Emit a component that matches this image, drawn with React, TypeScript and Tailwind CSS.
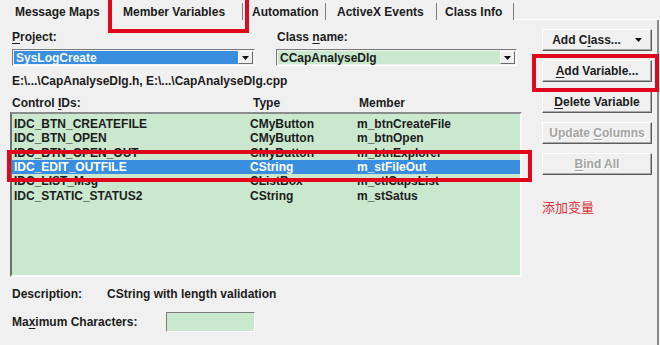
import type { ReactNode } from "react";

const rows = [
  { id: "IDC_BTN_CREATEFILE", type: "CMyButton", member: "m_btnCreateFile" },
  { id: "IDC_BTN_OPEN", type: "CMyButton", member: "m_btnOpen" },
  { id: "IDC_BTN_OPEN_OUT", type: "CMyButton", member: "m_btnExplorer" },
  { id: "IDC_EDIT_OUTFILE", type: "CString", member: "m_stFileOut", selected: true },
  { id: "IDC_LIST_Msg", type: "CListBox", member: "m_ctlCapsList" },
  { id: "IDC_STATIC_STATUS2", type: "CString", member: "m_stSatus" },
];

const tabs = [
  { label: "Message Maps", cls: "w-[108px] pl-[15px]" },
  { label: "Member Variables", cls: "w-[135px] pl-[15px] border-r border-r-[#7d7d7d]" },
  { label: "Automation", cls: "w-[83px] pl-[9px] border-r border-r-[#7d7d7d]" },
  { label: "ActiveX Events", cls: "w-[111px] pl-[11px] border-r border-r-[#7d7d7d]" },
  { label: "Class Info", cls: "w-[77px] pl-[8px] border-r border-r-[#7d7d7d]" },
];

const U = ({ children }: { children: ReactNode }) => (
  <span className="underline underline-offset-[2px]">{children}</span>
);

const DropBtn = () => (
  <div className="flex h-full w-[15px] items-center justify-center border border-t-white border-l-white border-b-[#6b6b6b] border-r-[#6b6b6b] bg-[#f0f0f0]">
    <svg width="7" height="4" viewBox="0 0 7 4">
      <path d="M0 0h7L3.5 4z" fill="#111" />
    </svg>
  </div>
);

const Btn = ({ children, disabled }: { children: ReactNode; disabled?: boolean }) => (
  <div
    className={`flex h-[22px] w-[110px] items-center justify-center border border-t-white border-l-white border-b-[#5c5c5c] border-r-[#5c5c5c] shadow-[inset_-1px_-1px_0_#a9a9a9] bg-[#f0f0f0] ${
      disabled ? "text-[#a3a3a3] [text-shadow:1px_1px_0_#ffffff]" : ""
    }`}
  >
    {children}
  </div>
);

export default function App() {
  return (
    <div className="relative h-[345px] w-[660px] overflow-hidden bg-[#f0f0f0] font-['Liberation_Sans',Arial,sans-serif] text-[12px] font-bold leading-[14px] text-[#1c1c1c]">
      {/* tab strip */}
      <div className="flex h-[20px] items-stretch">
        {tabs.map((t) => (
          <div key={t.label} className={`flex items-center mt-[3px] ${t.cls}`}>
            {t.label}
          </div>
        ))}
        <div className="flex-1 border-b border-b-white" />
      </div>

      <div className="flex h-[325px] w-[659px] border-r-2 border-r-[#8a8a8a]">
        {/* left part */}
        <div className="flex w-[532px] flex-col pl-[10px] pt-[10px]">
          <div className="flex h-[14px] pl-[2px]">
            <div className="w-[265px]">
              <U>P</U>roject:
            </div>
            <div>
              Class <U>n</U>ame:
            </div>
          </div>

          <div className="mt-[5px] flex h-[17px] pl-[2px]">
            <div className="flex w-[243px] border border-t-[#7a7a7a] border-l-[#7a7a7a] border-b-white border-r-white p-[1px]">
              <div className="flex flex-1 items-center bg-[#3a8ee0] pl-[2px] text-[#f4f8ff]">SysLogCreate</div>
              <DropBtn />
            </div>
            <div className="ml-[21px] flex w-[241px] border border-t-[#7a7a7a] border-l-[#7a7a7a] border-b-white border-r-white p-[1px]">
              <div className="flex flex-1 items-center bg-[#c9e8ce] pl-[2px]">CCapAnalyseDlg</div>
              <DropBtn />
            </div>
          </div>

          <div className="mt-[8px] h-[14px] pl-[2px]">E:\...\CapAnalyseDlg.h, E:\...\CapAnalyseDlg.cpp</div>

          <div className="mt-[8px] flex h-[14px] pl-[2px]">
            <div className="w-[241px]">
              Control <U>I</U>Ds:
            </div>
            <div className="w-[106px]">Type</div>
            <div>Member</div>
          </div>

          <div className="mt-[2px] h-[165px] w-[512px] border-2 border-t-[#8c8c8c] border-l-[#6e6e6e] border-b-[#fafafa] border-r-[#fafafa] bg-[#c9e8ce] pt-[3px]">
            {rows.map((r) => (
              <div
                key={r.id}
                className={`flex h-[14.3px] items-center leading-[14px] ${
                  r.selected ? "bg-[#3a8ee0] text-white" : ""
                }`}
              >
                <div className="w-[238px] pl-[2px]">{r.id}</div>
                <div className="w-[107px]">{r.type}</div>
                <div>{r.member}</div>
              </div>
            ))}
          </div>

          <div className="mt-[10px] flex h-[14px] pl-[2px]">
            <div className="w-[95px]">Description:</div>
            <div>CString with length validation</div>
          </div>

          <div className="mt-[11px] flex h-[20px] items-center pl-[2px]">
            <div className="w-[154px]">
              Ma<U>x</U>imum Characters:
            </div>
            <div className="h-[20px] w-[89px] border border-t-[#7a7a7a] border-l-[#7a7a7a] border-b-white border-r-white bg-[#c9e8ce]" />
          </div>
        </div>

        {/* right buttons */}
        <div className="flex flex-col gap-[9px] pl-[10px] pt-[9px]">
          <Btn>
            <span className="mr-[14px]">
              Add C<U>l</U>ass...
            </span>
            <svg width="7" height="4" viewBox="0 0 7 4">
              <path d="M0 0h7L3.5 4z" fill="#111" />
            </svg>
          </Btn>
          <Btn>
            <span>
              <U>A</U>dd Variable...
            </span>
          </Btn>
          <Btn>
            <span>
              <U>D</U>elete Variable
            </span>
          </Btn>
          <Btn disabled>
            <span>
              Update <U>C</U>olumns
            </span>
          </Btn>
          <Btn disabled>
            <span>
              <U>B</U>ind All
            </span>
          </Btn>
          <div className="mt-[16px] font-['Noto_Sans_CJK_SC',sans-serif] text-[13px] font-normal text-[#d8323a]">
            添加变量
          </div>
        </div>
      </div>

      {/* red annotation boxes */}
      <div className="absolute left-[108px] top-[-6px] h-[39px] w-[141px] border-[4px] border-[#e0061b]" />
      <div className="absolute left-[532px] top-[54px] h-[38px] w-[127px] border-[4px] border-[#e0061b]" />
      <div className="absolute left-[7px] top-[150px] h-[32px] w-[525px] border-[4px] border-[#e0061b]" />
    </div>
  );
}
